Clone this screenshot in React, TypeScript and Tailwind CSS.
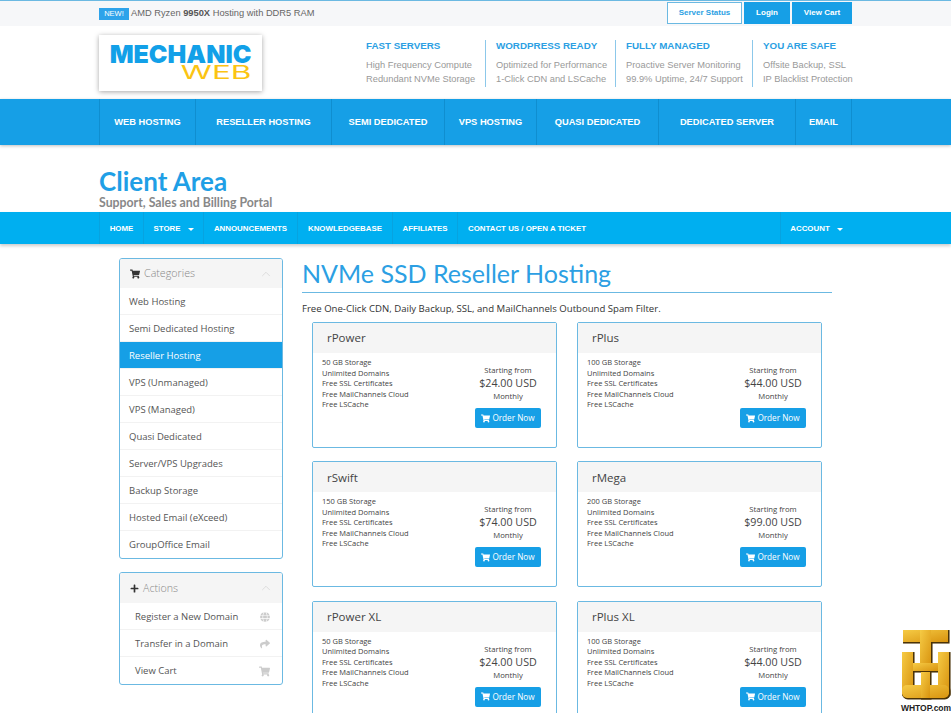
import { FaShoppingCart, FaPlus, FaGlobe, FaShare } from 'react-icons/fa'
import { ChevronUp } from 'lucide-react'

const features = [
  { title: 'FAST SERVERS', lines: ['High Frequency Compute', 'Redundant NVMe Storage'], box: 'w-[119px]' },
  { title: 'WORDPRESS READY', lines: ['Optimized for Performance', '1-Click CDN and LSCache'], box: 'w-[130px]' },
  { title: 'FULLY MANAGED', lines: ['Proactive Server Monitoring', '99.9% Uptime, 24/7 Support'], box: 'w-[137px]' },
  { title: 'YOU ARE SAFE', lines: ['Offsite Backup, SSL', 'IP Blacklist Protection'], box: 'w-[100px]' },
]

const mainNav = [
  { label: 'WEB HOSTING', w: 'w-[96px]' },
  { label: 'RESELLER HOSTING', w: 'w-[136px]' },
  { label: 'SEMI DEDICATED', w: 'w-[113px]' },
  { label: 'VPS HOSTING', w: 'w-[92px]' },
  { label: 'QUASI DEDICATED', w: 'w-[122px]' },
  { label: 'DEDICATED SERVER', w: 'w-[137px]' },
  { label: 'EMAIL', w: 'w-[56px]' },
]

const subNav = [
  { label: 'HOME', w: 'w-[44px]' },
  { label: 'STORE', w: 'w-[60px]', caret: true },
  { label: 'ANNOUNCEMENTS', w: 'w-[94px]' },
  { label: 'KNOWLEDGEBASE', w: 'w-[95px]' },
  { label: 'AFFILIATES', w: 'w-[65px]' },
  { label: 'CONTACT US / OPEN A TICKET', w: 'w-[139px]' },
]

const categories = ['Web Hosting', 'Semi Dedicated Hosting', 'Reseller Hosting', 'VPS (Unmanaged)', 'VPS (Managed)', 'Quasi Dedicated', 'Server/VPS Upgrades', 'Backup Storage', 'Hosted Email (eXceed)', 'GroupOffice Email']

const plans = [
  { name: 'rPower', storage: '50 GB Storage', price: '$24.00 USD' },
  { name: 'rPlus', storage: '100 GB Storage', price: '$44.00 USD' },
  { name: 'rSwift', storage: '150 GB Storage', price: '$74.00 USD' },
  { name: 'rMega', storage: '200 GB Storage', price: '$99.00 USD' },
  { name: 'rPower XL', storage: '50 GB Storage', price: '$24.00 USD' },
  { name: 'rPlus XL', storage: '100 GB Storage', price: '$44.00 USD' },
]

function Caret() {
  return <span className="ml-[7px] inline-block border-x-[3px] border-t-[3px] border-x-transparent border-t-white align-middle" />
}

function PanelHead({ icon, title, tall }: { icon: React.ReactNode; title: string; tall?: boolean }) {
  return (
    <div className={`flex ${tall ? 'h-[30px]' : 'h-[29px]'} items-center bg-[#f5f5f5] pl-[10px] pr-[9px] text-[10.7px] text-[#888]`}>
      <span className="mr-[4px] text-[#333]">{icon}</span>
      <span className="flex-1 font-light">{title}</span>
      <ChevronUp size={14} strokeWidth={1} className="text-[#ccc]" />
    </div>
  )
}

function PlanCard({ plan }: { plan: (typeof plans)[number] }) {
  return (
    <div className="h-[126px] rounded-[2px] border border-[#6bb9e2] bg-white">
      <div className="flex h-[30px] items-center bg-[#f5f5f5] pl-[14px] text-[11.5px] text-[#444]">{plan.name}</div>
      <div className="flex pl-[9px] pt-[4px]">
        <ul className="w-[153px] text-[7.5px] leading-[10.5px] text-[#444]">
          <li>{plan.storage}</li>
          <li>Unlimited Domains</li>
          <li>Free SSL Certificates</li>
          <li>Free MailChannels Cloud</li>
          <li>Free LSCache</li>
        </ul>
        <div className="flex w-[66px] flex-col items-center pt-[7px] text-[#444]">
          <span className="text-[7.7px] leading-[12px]">Starting from</span>
          <span className="whitespace-nowrap text-[10.7px] leading-[14px]">{plan.price}</span>
          <span className="text-[7.7px] leading-[12px]">Monthly</span>
          <button className="mt-[6px] flex h-[20px] w-[66px] shrink-0 items-center justify-center gap-[2px] rounded-[2px] bg-[#169fe6] text-[8.2px] text-white">
            <FaShoppingCart size={9} />
            Order Now
          </button>
        </div>
      </div>
    </div>
  )
}

// gold monogram, drawn twice: dark copy underneath for the bevel
function WhtopMark() {
  const shapes = (
    <>
      <rect x="8" y="5" width="45" height="12" />
      <rect x="25" y="5" width="11" height="37" />
      <rect x="7" y="27" width="11" height="42" />
      <rect x="43" y="27" width="11" height="42" />
      <rect x="7" y="60" width="47" height="13" rx="5" />
      <rect x="26" y="47" width="9" height="26" />
      <rect x="18" y="38" width="25" height="8" />
    </>
  )
  return (
    <svg width="56" height="78" viewBox="0 0 56 78">
      <defs>
        <linearGradient id="whtopGold" x1="0" y1="0" x2="1" y2="1">
          <stop offset="0" stopColor="#f6cb45" />
          <stop offset="1" stopColor="#d8930f" />
        </linearGradient>
      </defs>
      <g fill="#4a3206" stroke="#4a3206" strokeWidth="1.5" transform="translate(0.8 0.8)">{shapes}</g>
      <g fill="url(#whtopGold)">{shapes}</g>
    </svg>
  )
}

export default function App() {
  return (
    <div className="relative h-[713px] overflow-hidden bg-white font-['Open_Sans',sans-serif]">
      {/* top bar */}
      <div className="h-[26px] border-t border-[#6bb9e2] bg-[#f6f7f9] font-['Liberation_Sans',sans-serif]">
        <div className="mx-auto flex h-full w-[753px] items-center justify-between">
          <div className="flex items-center text-[9.3px] text-[#666]">
            <span className="mr-[2px] flex h-[12px] w-[30px] items-center justify-center bg-[#2ea3ea] text-[7.5px] text-white">NEW!</span>
            <span>AMD Ryzen <b className="text-[#555]">9950X</b> Hosting with DDR5 RAM</span>
          </div>
          <div className="mt-[-2px] flex gap-[2px] text-[8px] font-bold">
            <a className="flex h-[22px] w-[75px] items-center justify-center border border-[#6bb9e2] bg-white text-[#2c9fe3]">Server Status</a>
            <a className="flex h-[22px] w-[46px] items-center justify-center bg-[#169fe6] text-white">Login</a>
            <a className="flex h-[22px] w-[60px] items-center justify-center bg-[#169fe6] text-white">View Cart</a>
          </div>
        </div>
      </div>

      {/* logo + selling points */}
      <div className="mx-auto flex h-[73px] w-[753px] items-start font-['Liberation_Sans',sans-serif]">
        <div className="mt-[9px] flex h-[56px] w-[163px] shrink-0 flex-col items-center bg-white shadow-[0_1px_5px_rgba(0,0,0,0.35)]">
          <span className="mt-[7px] font-['Inter',sans-serif] text-[25px] font-black leading-[24px] text-[#12a0e8]">MECHANIC</span>
          <span className="ml-[71px] mt-[-1px] origin-center scale-x-[1.75] font-['Inter',sans-serif] text-[18px] font-normal leading-[15px] text-[#fbc412]">WEB</span>
        </div>
        <div className="ml-[104px] mt-[14px] flex">
          {features.map((f, i) => (
            <div key={f.title} className={`${f.box} ${i > 0 ? 'border-l border-[#8cc8ea] pl-[10px]' : ''} h-[47px] shrink-0`}>
              <div className="text-[9.8px] font-bold leading-[12px] text-[#2c9fe3]">{f.title}</div>
              <div className="mt-[6px] whitespace-nowrap text-[9.3px] leading-[14px] text-[#999]">
                {f.lines.map(l => <div key={l}>{l}</div>)}
              </div>
            </div>
          ))}
        </div>
      </div>

      {/* main nav */}
      <div className="h-[46px] bg-[#169fe6] font-['Liberation_Sans',sans-serif] shadow-[0_1px_3px_rgba(0,0,0,0.25)]">
        <div className="mx-auto flex h-full w-[753px] border-l border-[#0f8ed0]">
          {mainNav.map(n => (
            <a key={n.label} className={`${n.w} flex shrink-0 items-center justify-center border-r border-[#0f8ed0] pt-[2px] text-[9.3px] font-bold text-white`}>{n.label}</a>
          ))}
        </div>
      </div>

      {/* page title */}
      <div className="mx-auto h-[67px] w-[753px] pt-[22px]">
        <h1 className="font-['Lato',sans-serif] text-[26px] font-bold leading-[29px] text-[#1f9fe6]">Client Area</h1>
        <p className="font-['Lato',sans-serif] text-[12.3px] font-bold leading-[14px] text-[#888]">Support, Sales and Billing Portal</p>
      </div>

      {/* secondary nav */}
      <div className="h-[32px] bg-[#00aff0] font-['Liberation_Sans',sans-serif] shadow-[0_2px_3px_rgba(0,0,0,0.2)]">
        <div className="mx-auto flex h-full w-[753px] justify-between">
          <div className="flex">
            {subNav.map(n => (
              <a key={n.label} className={`${n.w} flex shrink-0 items-center justify-center whitespace-nowrap border-l border-[#07a3e0] pt-[2px] text-[7.9px] font-bold text-white`}>
                {n.label}
                {n.caret && <Caret />}
              </a>
            ))}
          </div>
          <a className="flex w-[72px] items-center justify-center border-l border-[#07a3e0] pt-[2px] text-[7.9px] font-bold text-white">
            ACCOUNT
            <Caret />
          </a>
        </div>
      </div>

      {/* content */}
      <div className="mx-auto flex w-[713px] pt-[14px]">
        <aside className="w-[164px] shrink-0">
          <div className="overflow-hidden rounded-[3px] border border-[#6bb9e2] bg-white">
            <PanelHead icon={<FaShoppingCart size={10} />} title="Categories" />
            {categories.map(c => (
              <div key={c} className={`flex h-[27px] items-center border-b border-[#f2f2f2] pl-[9px] pt-[2px] text-[9.5px] last:border-b-0 ${c === 'Reseller Hosting' ? 'bg-[#169fe6] text-white' : 'text-[#555]'}`}>{c}</div>
            ))}
          </div>
          <div className="mt-[13px] overflow-hidden rounded-[3px] border border-[#6bb9e2] bg-white">
            <PanelHead icon={<FaPlus size={9} />} title="Actions" tall />
            <div className="flex h-[27px] items-center justify-between border-b border-[#f2f2f2] pl-[15px] pr-[12px] pt-[2px] text-[9.5px] text-[#555]">Register a New Domain <FaGlobe size={10} className="text-[#ccc]" /></div>
            <div className="flex h-[27px] items-center justify-between border-b border-[#f2f2f2] pl-[15px] pr-[12px] pt-[2px] text-[9.5px] text-[#555]">Transfer in a Domain <FaShare size={10} className="text-[#ccc]" /></div>
            <div className="flex h-[27px] items-center justify-between pl-[15px] pr-[12px] pt-[1px] text-[9.5px] text-[#555]">View Cart <FaShoppingCart size={11} className="text-[#ccc]" /></div>
          </div>
        </aside>

        <main className="ml-[19px] w-[530px]">
          <h2 className="h-[35px] border-b border-[#6bb9e2] font-['Lato',sans-serif] text-[25px] leading-[30px] text-[#2c9fe3]">NVMe SSD Reseller Hosting</h2>
          <p className="mt-[9px] text-[9.6px] leading-[14px] text-[#333]">Free One-Click CDN, Daily Backup, SSL, and MailChannels Outbound Spam Filter.</p>
          <div className="mt-[6px] grid grid-cols-[245px_245px] gap-x-[20px] gap-y-[13.4px] px-[10px]">
            {plans.map(p => <PlanCard key={p.name} plan={p} />)}
          </div>
        </main>
      </div>

      {/* WHTop badge */}
      <div className="absolute bottom-0 right-0 flex h-[88px] w-[56px] flex-col items-center">
        <WhtopMark />
        <span className="mt-[1px] whitespace-nowrap pl-[6px] font-['Liberation_Sans',sans-serif] text-[8.5px] font-bold leading-[9px] text-[#222]">WHTOP.com</span>
      </div>
    </div>
  )
}
